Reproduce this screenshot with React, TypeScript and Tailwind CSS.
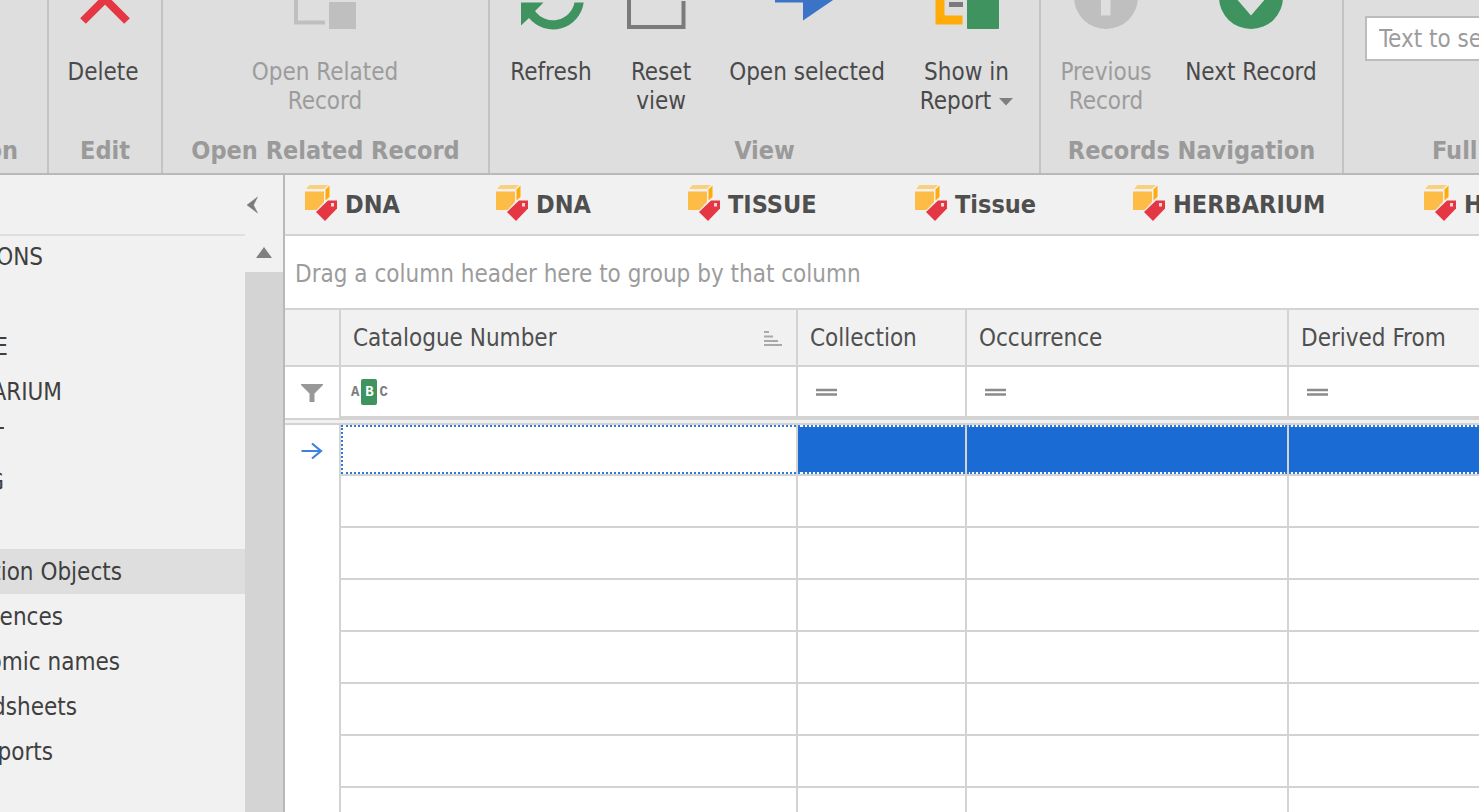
import type { ReactNode } from 'react';

function DeleteIcon() {
  return (
    <svg className="size-16" viewBox="0 0 64 64" aria-hidden="true">
      <path d="M12 12 L56 56 M56 12 L12 56" stroke="#e53644" strokeWidth="8" fill="none" />
    </svg>
  );
}

function RelatedIcon() {
  return (
    <svg className="size-16" viewBox="0 0 64 64" aria-hidden="true">
      <path d="M3 20 V57.500 H32" stroke="#bfbfbf" strokeWidth="4" fill="none" />
      <rect x="36" y="37" width="27" height="27" fill="#bfbfbf" />
    </svg>
  );
}

function RefreshIcon() {
  return (
    <svg className="size-16 overflow-visible" viewBox="0 0 64 64" aria-hidden="true">
      <path d="M2 37.500 H24.500 L16 46 A22 22 0 0 0 55.500 37.500 H64.700 A31 31 0 0 1 10 53 L2 60.500 Z" fill="#3e935e" />
      <path d="M3 29 A31 31 0 0 1 56 11 L64 4 V28 H41 L50 19 A22 22 0 0 0 12 29 Z" fill="#3e935e" />
    </svg>
  );
}

function ResetIcon() {
  return (
    <svg className="size-16 overflow-visible" viewBox="0 0 64 64" aria-hidden="true">
      <path d="M54.500 36 V62 H0 V8" stroke="#7b7b7b" strokeWidth="4" fill="none" />
      <path d="M34 14 L50 30" stroke="#7b7b7b" strokeWidth="4" />
    </svg>
  );
}

function OpenIcon() {
  return (
    <svg className="size-16" viewBox="0 0 64 64" aria-hidden="true">
      <path d="M0 25 H28 V7 L64 31 L28 55.500 V37.500 H0 Z" fill="#3b74c7" />
    </svg>
  );
}

function ReportIcon() {
  return (
    <svg className="size-16" viewBox="0 0 64 64" aria-hidden="true">
      <path d="M27.500 55 H5 V4 H44 V16" stroke="#ffab0a" strokeWidth="9" fill="none" />
      <rect x="14" y="37" width="14" height="5" fill="#7b7b7b" />
      <rect x="32" y="22" width="32" height="42" rx="1" fill="#3e935e" />
    </svg>
  );
}

function PreviousIcon() {
  return (
    <svg className="size-16" viewBox="0 0 64 64" aria-hidden="true">
      <circle cx="32" cy="32" r="32" fill="#bfbfbf" />
      <path d="M27 50.500 V30 H14 L32 12 L50 30 H36.500 V50.500 Z" fill="#dedede" />
    </svg>
  );
}

function NextIcon() {
  return (
    <svg className="size-16" viewBox="0 0 64 64" aria-hidden="true">
      <circle cx="32" cy="32" r="32" fill="#3e935e" />
      <path d="M27 12 V32 H16 L32 50.500 L48 32 H37 V12 Z" fill="#dedede" />
    </svg>
  );
}

function BoxTagIcon() {
  return (
    <svg className="h-9 w-8 shrink-0" viewBox="0 0 32 36" aria-hidden="true">
      <path d="M4.500 0 H23 L19 4 H1 Z" fill="#f9cf80" />
      <path d="M24.500 0.500 V12 L20.500 15.500 V4.500 Z" fill="#ffab0a" />
      <path d="M0 6.500 H19 V17 L11.500 25 H0 Z" fill="#fcbc45" />
      <path d="M11 27 L23 15.500 H32 V23.500 L20 36 Z" fill="#e53644" />
      <rect x="26" y="18" width="3" height="3.500" fill="#f6d5d7" />
    </svg>
  );
}

type RibbonButtonProps = {
  icon: ReactNode;
  width: string;
  disabled?: boolean;
  children: ReactNode;
};

function RibbonButton({ icon, width, disabled, children }: RibbonButtonProps) {
  return (
    <button
      type="button"
      disabled={disabled}
      className={`${width} -mt-[35px] flex shrink-0 flex-col items-center gap-[29px] leading-[29px] text-[#4a4a4a] disabled:text-[#9c9c9c]`}
    >
      {icon}
      <span>{children}</span>
    </button>
  );
}

function RibbonGroup({ title, width, children }: { title: string; width: string; children?: ReactNode }) {
  return (
    <section className={`${width} flex flex-col overflow-hidden border-r-2 border-[#c3c3c3]`}>
      <div className="flex h-[136px] items-start">{children}</div>
      <h2 className="text-center text-[25px] leading-[30px] font-bold text-[#9a9a9a]">{title}</h2>
    </section>
  );
}

const navItems = [
  { label: 'ONS', width: 'w-[43px]' },
  { label: '', width: 'w-0' },
  { label: 'E', width: 'w-[8px]' },
  { label: 'ARIUM', width: 'w-[62px]' },
  { label: 'T', width: 'w-[4px]' },
  { label: 'G', width: 'w-[4px]' },
  { label: '', width: 'w-0' },
  { label: 'tion Objects', width: 'w-[122px]', selected: true },
  { label: 'ences', width: 'w-[63px]' },
  { label: 'omic names', width: 'w-[120px]' },
  { label: 'dsheets', width: 'w-[77px]' },
  { label: 'ports', width: 'w-[53px]' },
];

const tabs = [
  { label: 'DNA', width: 'w-[191px]' },
  { label: 'DNA', width: 'w-[192px]' },
  { label: 'TISSUE', width: 'w-[227px]' },
  { label: 'Tissue', width: 'w-[218px]' },
  { label: 'HERBARIUM', width: 'w-[291px]' },
  { label: 'HERBARIUM', width: 'w-[291px]' },
];

const columns = ['Catalogue Number', 'Collection', 'Occurrence', 'Derived From'];
const emptyRows = [1, 2, 3, 4, 5, 6, 7];

function Sidebar() {
  return (
    <aside className="flex w-[285px] shrink-0 border-r-2 border-[#b9b9b9] bg-[#f1f1f1]">
      <div className="flex min-w-0 grow flex-col">
        <div className="flex h-[59px]" />
        <nav className="shadow-[inset_0_2px_0_#dfdfdf]">
          <ul>
            {navItems.map((item, i) => (
              <li key={i} className={item.selected ? 'h-[45px] bg-[#dedede]' : 'h-[45px]'}>
                {item.label && (
                  <a href="#" className={`${item.width} flex h-full items-center justify-end overflow-hidden whitespace-nowrap text-[#3f3f3f]`}>
                    {item.label}
                  </a>
                )}
              </li>
            ))}
          </ul>
        </nav>
      </div>
      <div className="flex w-[38px] shrink-0 flex-col">
        <button type="button" aria-label="Collapse" className="flex h-[59px] items-center pl-[2px]">
          <svg className="h-[18px] w-3" viewBox="0 0 12 18" aria-hidden="true">
            <path d="M10.500 1 L0 9 L10.500 17 L6.500 9 Z" fill="#7a7a7a" stroke="#7a7a7a" strokeWidth="0.500" />
          </svg>
        </button>
        <button type="button" aria-label="Scroll up" className="flex h-[38px] items-center justify-center">
          <svg className="h-3 w-4" viewBox="0 0 16 12" aria-hidden="true">
            <path d="M8 0 L16 11 H0 Z" fill="#7f7f7f" />
          </svg>
        </button>
        <div className="grow bg-[#d4d4d4]" />
      </div>
    </aside>
  );
}

function Grid() {
  return (
    <table className="w-full table-fixed border-separate border-spacing-0 text-left">
      <colgroup>
        <col className="w-[56px]" />
        <col className="w-[457px]" />
        <col className="w-[169px]" />
        <col className="w-[322px]" />
        <col />
      </colgroup>
      <thead>
        <tr className="h-[57px] bg-[#f1f1f1] text-[#4f4f4f]">
          <td className="border-r-2 border-b-2 border-[#d3d3d3]" />
          {columns.map((name, i) => (
            <th key={name} scope="col" className="border-r-2 border-b-2 border-[#d3d3d3] p-0 pr-3 pl-3 font-normal whitespace-nowrap last:border-r-0">
              <div className="flex items-center justify-between">
                {name}
                {i === 0 && (
                  <svg className="h-4 w-5" viewBox="0 0 20 16" aria-hidden="true">
                    <path d="M0 2 H5 M0 6.500 H9 M0 11 H14 M0 15 H18" stroke="#a9a9a9" strokeWidth="2" />
                  </svg>
                )}
              </div>
            </th>
          ))}
        </tr>
        <tr className="h-[53px] bg-white">
          <td className="border-r-2 border-b-2 border-[#d3d3d3] p-0">
            <svg className="mx-auto h-5 w-6" viewBox="0 0 24 20" aria-hidden="true">
              <path d="M1 1 H23 V2 L14.500 10.500 V19 H9.500 V10.500 L1 2 Z" fill="#989898" />
            </svg>
          </td>
          {columns.map((name, i) => (
            <td key={name} className="border-r-2 border-b-4 border-[#d3d3d3] p-0 pl-[10px] last:border-r-0">
              {i === 0 ? (
                <span className="flex items-center gap-[2px] font-[Liberation_Mono,monospace] text-[14px] leading-none font-bold text-[#7d7d7d]">
                  A<span className="flex h-[26px] w-4 items-center justify-center rounded-[2px] bg-[#3e935e] text-white">B</span>C
                </span>
              ) : (
                <svg className="ml-2 h-3 w-[22px]" viewBox="0 0 22 12" aria-hidden="true">
                  <path d="M0 4 H21 M0 8.500 H21" stroke="#8b8b8b" strokeWidth="2.400" />
                </svg>
              )}
            </td>
          ))}
        </tr>
        <tr className="h-[5px] bg-[#f1f1f1]">
          <td colSpan={5} className="border-b-2 border-[#d3d3d3] p-0" />
        </tr>
      </thead>
      <tbody>
        <tr className="h-[51px]">
          <td className="border-r-2 border-[#d3d3d3] p-0">
            <svg className="mx-auto h-[18px] w-[22px]" viewBox="0 0 22 18" aria-hidden="true">
              <path d="M0.500 9 H20.500 M11 1.500 L20 9 L11 16.500" stroke="#3c83de" strokeWidth="2.200" fill="none" />
            </svg>
          </td>
          <td className="border-r-2 border-b-2 border-[#d3d3d3] p-0">
            <div className="h-[49px] border-y-2 border-l-2 border-dotted border-[#3079d9]" />
          </td>
          {['collection', 'occurrence', 'derived'].map((key) => (
            <td key={key} className="border-r-2 border-b-2 border-[#d3d3d3] p-0 last:border-r-0">
              <div className="h-[49px] border-y-2 border-dotted border-[#3079d9] bg-[#1a6bd4] bg-clip-padding" />
            </td>
          ))}
        </tr>
        {emptyRows.map((row) => (
          <tr key={row} className="h-[52px]">
            <td className="border-r-2 border-[#d3d3d3]" />
            {columns.map((name) => (
              <td key={name} className="border-r-2 border-b-2 border-[#d3d3d3] last:border-r-0" />
            ))}
          </tr>
        ))}
      </tbody>
    </table>
  );
}

export default function App() {
  return (
    <div className="flex h-screen flex-col overflow-hidden bg-white font-['DejaVu_Sans_Condensed','Noto_Sans',sans-serif] text-[24px]">
      <header className="flex h-[175px] shrink-0 overflow-hidden border-b-2 border-[#b9b9b9] bg-[#dedede]">
        <section className="flex w-[49px] shrink-0 flex-col overflow-hidden border-r-2 border-[#c3c3c3] pt-[136px]">
          <h2 className="flex w-[18px] justify-end text-[25px] leading-[30px] font-bold text-[#9a9a9a]">on</h2>
        </section>
        <RibbonGroup title="Edit" width="w-[114px] shrink-0">
          <RibbonButton icon={<DeleteIcon />} width="w-[108px]">Delete</RibbonButton>
        </RibbonGroup>
        <RibbonGroup title="Open Related Record" width="w-[327px] shrink-0">
          <RibbonButton icon={<RelatedIcon />} width="w-[324px]" disabled>
            Open Related
            <br />
            Record
          </RibbonButton>
        </RibbonGroup>
        <RibbonGroup title="View" width="w-[551px] shrink-0">
          <RibbonButton icon={<RefreshIcon />} width="w-[122px]">Refresh</RibbonButton>
          <RibbonButton icon={<ResetIcon />} width="w-[98px]">
            Reset
            <br />
            view
          </RibbonButton>
          <RibbonButton icon={<OpenIcon />} width="w-[194px]">Open selected</RibbonButton>
          <RibbonButton icon={<ReportIcon />} width="w-[125px]">
            Show in
            <br />
            <span className="flex items-center gap-2">
              Report
              <svg className="h-2 w-[14px]" viewBox="0 0 14 8" aria-hidden="true">
                <path d="M0 0 H14 L7 7.500 Z" fill="#7f7f7f" />
              </svg>
            </span>
          </RibbonButton>
        </RibbonGroup>
        <RibbonGroup title="Records Navigation" width="w-[303px] shrink-0">
          <RibbonButton icon={<PreviousIcon />} width="w-[130px]" disabled>
            Previous
            <br />
            Record
          </RibbonButton>
          <RibbonButton icon={<NextIcon />} width="w-[160px]">Next Record</RibbonButton>
        </RibbonGroup>
        <section className="flex min-w-0 grow flex-col overflow-hidden">
          <div className="flex h-[136px] pt-4 pl-[21px]">
            <input
              type="text"
              aria-label="Text to search"
              placeholder="Text to search..."
              className="h-[45px] w-[260px] shrink-0 border-2 border-[#bcbcbc] bg-white px-3 placeholder:text-[#9c9c9c]"
            />
          </div>
          <h2 className="pl-[88px] text-[25px] leading-[30px] font-bold text-[#9a9a9a]">Full</h2>
        </section>
      </header>
      <div className="flex min-h-0 grow">
        <Sidebar />
        <main className="flex min-w-0 grow flex-col overflow-hidden">
          <div role="tablist" className="flex h-[61px] shrink-0 overflow-hidden border-b-2 border-[#d3d3d3] bg-[#f1f1f1] pl-5">
            {tabs.map((tab, i) => (
              <button
                key={i}
                type="button"
                role="tab"
                className={`${tab.width} flex shrink-0 items-center gap-2 pb-[4px] text-[25px] font-bold text-[#4f4f4f]`}
              >
                <BoxTagIcon />
                <span className="pt-1">{tab.label}</span>
              </button>
            ))}
          </div>
          <div className="flex h-[74px] shrink-0 items-center border-b-2 border-[#d3d3d3] pt-1 pl-[10px] text-[#9c9c9c]">
            Drag a column header here to group by that column
          </div>
          <Grid />
        </main>
      </div>
    </div>
  );
}
